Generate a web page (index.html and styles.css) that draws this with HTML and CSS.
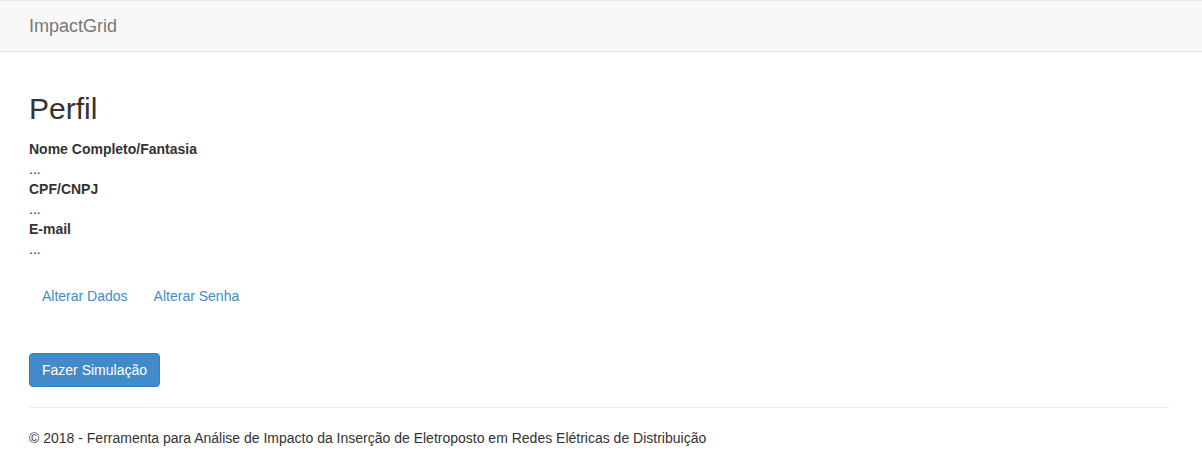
FILE: index.html
```
<!DOCTYPE html>
<html lang="pt-BR">
<head>
<meta charset="utf-8">
<title>Perfil - ImpactGrid</title>
<link rel="stylesheet" href="styles.css">
</head>
<body>
<nav class="navbar">
  <div class="container">
    <a class="brand" href="#">ImpactGrid</a>
  </div>
</nav>
<main class="container body-content">
  <h2 class="title">Perfil</h2>
  <dl class="profile">
    <dt>Nome Completo/Fantasia</dt>
    <dd>...</dd>
    <dt>CPF/CNPJ</dt>
    <dd>...</dd>
    <dt>E-mail</dt>
    <dd>...</dd>
  </dl>
  <div class="links"><a class="btn btn-link" href="#">Alterar Dados</a><a class="btn btn-link" href="#">Alterar Senha</a></div>
  <div class="actions">
    <a class="btn btn-primary" href="#">Fazer Simulação</a>
  </div>
  <hr class="sep">
  <footer class="footer">
    <p>© 2018 - Ferramenta para Análise de Impacto da Inserção de Eletroposto em Redes Elétricas de Distribuição</p>
  </footer>
</main>
</body>
</html>
```
FILE: styles.css
```
* { box-sizing: border-box; }
html, body { margin: 0; padding: 0; }
body {
  font-family: "Liberation Sans", Arial, Helvetica, sans-serif;
  font-size: 14px;
  line-height: 20px;
  color: #333;
  background: #fff;
}
.container {
  width: 1170px;
  padding: 0 15px;
  margin: 0 14px;
}
.navbar {
  height: 52px;
  background: #f8f8f8;
  border-top: 1px solid #e7e7e7;
  border-bottom: 1px solid #e7e7e7;
}
.navbar .container {
  display: flex;
  align-items: center;
  height: 50px;
}
.brand {
  font-size: 18px;
  line-height: 20px;
  color: #777;
  text-decoration: none;
}
.title {
  font-size: 30px;
  font-weight: 500;
  line-height: 33px;
  margin: 40px 0 14px;
}
.profile { margin: 0 0 20px; }
.profile dt { font-weight: bold; }
.profile dd { margin: 0; }
.links { display: flex; }
.btn {
  display: inline-block;
  padding: 6px 12px;
  font-size: 14px;
  line-height: 20px;
  border: 1px solid transparent;
  border-radius: 4px;
  text-decoration: none;
}
.btn-link { color: #428bca; }
.actions { margin-top: 40px; }
.btn-primary {
  color: #fff;
  background: #428bca;
  border-color: #357ebd;
}
.sep {
  margin: 20px 0;
  border: 0;
  border-top: 1px solid #eee;
  height: 0;
}
.footer p { margin: 0 0 10px; }
```
